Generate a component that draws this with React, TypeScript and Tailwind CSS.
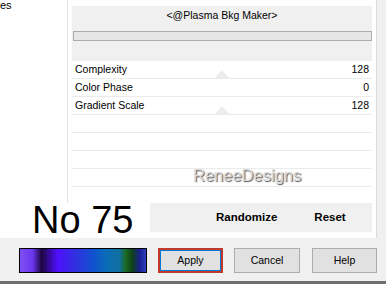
import React from 'react';

const PARAMS = [
  { label: 'Complexity', value: '128', marker: true },
  { label: 'Color Phase', value: '0', marker: false },
  { label: 'Gradient Scale', value: '128', marker: true },
  { label: '', value: '', marker: false },
  { label: '', value: '', marker: false },
  { label: '', value: '', marker: false },
  { label: '', value: '', marker: false },
];

const Marker = () => (
  <div className="absolute left-[143px] bottom-0 w-0 h-0 border-l-[7px] border-r-[7px] border-b-[8px] border-l-transparent border-r-transparent border-b-[#ececec]" />
);

export default function App() {
  return (
    <div className="relative w-[386px] h-[284px] overflow-hidden bg-[#f0f0f0] flex flex-col font-['Liberation_Sans',Arial,sans-serif] text-black">
      <div className="h-[238px] flex bg-white">
        {/* left list column */}
        <div className="w-[68px] border-r border-[#e3e3e3] text-[11px] leading-[10px]">
          <span className="block">es</span>
        </div>

        {/* filter panel */}
        <div className="w-[309px] px-[4px] pt-[6px] border-r border-[#dcdcdc] flex flex-col">
          <div className="h-[55px] bg-[#f0f0f0] flex flex-col">
            <div className="h-[20px] flex items-center justify-center text-[10.5px]">
              &lt;@Plasma Bkg Maker&gt;
            </div>
            <div className="mt-[5px] ml-[1px] h-[10px] border border-[#adadad] bg-[#e6e6e6]" />
          </div>

          <div className="h-[142px] flex flex-col">
            {PARAMS.map((p, i) => (
              <div
                key={i}
                className="relative h-[18px] border-b border-[#ebebeb] flex items-center justify-between px-[3px] text-[10.5px]"
              >
                <span>{p.label}</span>
                <span>{p.value}</span>
                {p.marker && <Marker />}
              </div>
            ))}
            <div className="h-[16px]" />
          </div>

          <div className="h-[29px] bg-[#f0f0f0] flex items-center text-[11.5px] font-bold">
            <span className="ml-[144px]">Randomize</span>
            <span className="ml-[37px]">Reset</span>
          </div>
        </div>

        <div className="flex-1 bg-[#f0f0f0]" />
      </div>

      {/* dialog buttons */}
      <div className="h-[43px] flex items-start pt-[10px] text-[10.5px]">
        <div className="ml-[19px] w-[128px] h-[25px] border border-black bg-[linear-gradient(90deg,#8050f0_0%,#6a36f0_10%,#1e0640_17%,#5010ff_30%,#3030e0_44%,#1050d0_58%,#0a6cb8_68%,#1070a0_79%,#1a6a20_84%,#0f4318_89%,#1a2090_95%,#3040c0_100%)]" />
        <button className="ml-[11px] w-[65px] h-[25px] border-2 border-[#c0392b] bg-[#e1e1e1] shadow-[inset_0_0_0_1px_#0078d7] flex items-center justify-center">
          Apply
        </button>
        <button className="ml-[11px] w-[66px] h-[25px] border border-[#adadad] bg-[#e1e1e1] flex items-center justify-center">
          Cancel
        </button>
        <button className="ml-[12px] w-[65px] h-[25px] border border-[#adadad] bg-[#e1e1e1] flex items-center justify-center">
          Help
        </button>
      </div>
      <div className="h-[3px] bg-[#6f6f6f]" />

      {/* watermark */}
      <div className="absolute left-[193px] top-[163px] text-[16.5px] text-[#dadada] [text-shadow:1px_1px_1px_#555]">
        ReneeDesigns
      </div>

      {/* annotation */}
      <div className="absolute left-0 top-[203px] w-[150px] h-[35px] bg-white flex items-center">
        <span className="ml-[32px] text-[38px] leading-none -mt-[2px]">No 75</span>
      </div>
    </div>
  );
}
